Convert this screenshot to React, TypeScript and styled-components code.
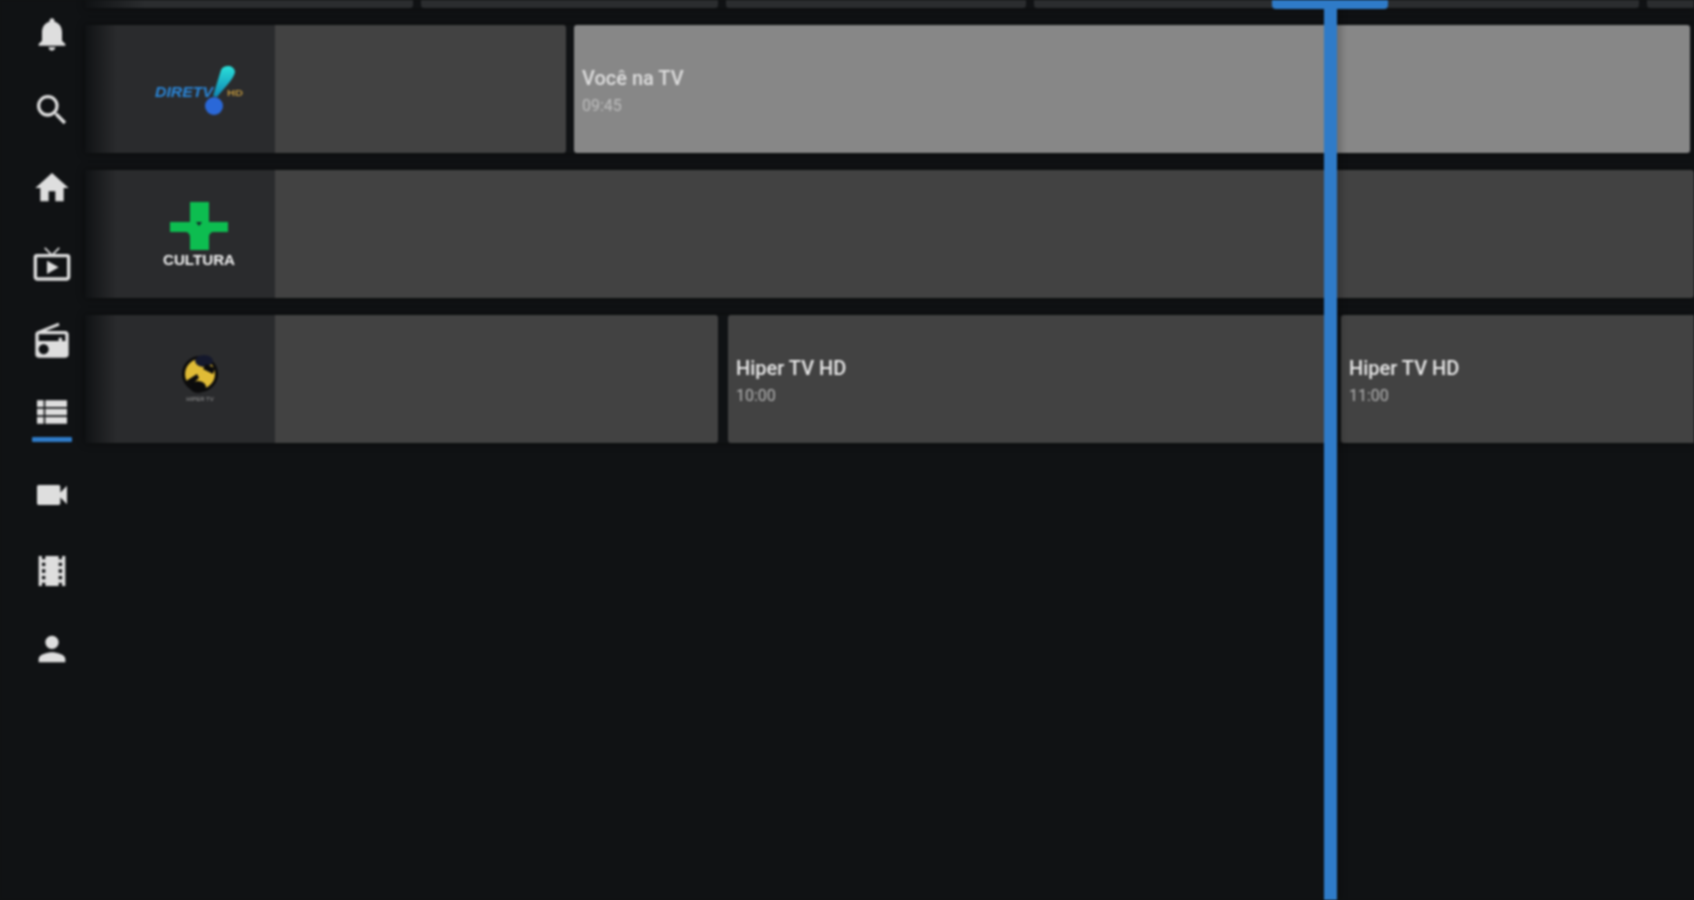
import {
  MdHome,
  MdLiveTv,
  MdLocalMovies,
  MdNotifications,
  MdPerson,
  MdRadio,
  MdSearch,
  MdVideocam,
  MdViewList,
} from "react-icons/md";
import styled, { createGlobalStyle } from "styled-components";

const GlobalStyle = createGlobalStyle`
  html, body {
    margin: 0;
    padding: 0;
    background: #101214;
    font-family: Roboto, "Liberation Sans", sans-serif;
  }
`;

const Page = styled.div`
  width: 1694px;
  height: 900px;
  display: flex;
  overflow: hidden;
  background: #101214;
  filter: blur(0.8px);
`;

const Sidebar = styled.nav`
  flex: 0 0 85px;
  width: 85px;
  padding: 14px 0 0 19px;
  box-sizing: border-box;
  display: flex;
  flex-direction: column;
`;

const NavItem = styled.div<{ $height: number; $active?: boolean }>`
  height: ${({ $height }) => $height}px;
  display: flex;
  flex-direction: column;
  align-items: center;
  color: #dedede;

  &::after {
    content: "";
    display: ${({ $active }) => ($active ? "block" : "none")};
    width: 40px;
    height: 5px;
    margin-top: 5px;
    border-radius: 1px;
    background: #2f7bc8;
  }
`;

const Guide = styled.main`
  position: relative;
  flex: 1;
  min-width: 0;
  display: flex;
  flex-direction: column;
  gap: 17px;
`;

const Row = styled.div<{ $top?: boolean }>`
  height: ${({ $top }) => ($top ? 8 : 128)}px;
  display: flex;
  overflow: hidden;
  box-shadow: 0 0 8px rgba(0, 0, 0, 0.45);
`;

const TopCell = styled.div<{ $width: number; $first?: boolean }>`
  flex: 0 0 ${({ $width }) => $width}px;
  height: 8px;
  margin-right: 8px;
  border-radius: 0 0 3px 3px;
  background: ${({ $first }) =>
    $first ? "linear-gradient(90deg, #101214 0, #2b2d2f 60px)" : "#2b2d2f"};
`;

const Channel = styled.div`
  flex: 0 0 190px;
  padding-left: 36px;
  box-sizing: border-box;
  display: flex;
  align-items: center;
  justify-content: center;
  background: linear-gradient(90deg, #101214 0, #2a2b2d 32px);
`;

const Program = styled.div<{
  $width?: number;
  $gap?: number;
  $focused?: boolean;
  $attached?: boolean;
}>`
  flex: ${({ $width }) => ($width ? `0 0 ${$width}px` : "1 1 auto")};
  margin-right: ${({ $gap }) => $gap ?? 0}px;
  padding: 4px 8px 0;
  box-sizing: border-box;
  display: flex;
  flex-direction: column;
  justify-content: center;
  border-radius: ${({ $attached }) => ($attached ? "0 3px 3px 0" : "3px")};
  background: ${({ $focused }) => ($focused ? "#878787" : "#424242")};
`;

const Title = styled.div<{ $focused?: boolean }>`
  font-size: 20px;
  line-height: 24px;
  font-weight: 500;
  white-space: nowrap;
  color: ${({ $focused }) => ($focused ? "#dedede" : "#e8e8e8")};
`;

const Time = styled.div<{ $focused?: boolean }>`
  margin-top: 6px;
  font-size: 16px;
  line-height: 20px;
  color: ${({ $focused }) => ($focused ? "#bdbdbd" : "#b4b4b4")};
`;

const NowLine = styled.div`
  position: absolute;
  top: 0;
  bottom: 0;
  left: 1239px;
  width: 13px;
  background: #2f7bc8;
  box-shadow: 5px 0 6px rgba(0, 0, 0, 0.18);
`;

const NowTab = styled.div`
  position: absolute;
  top: 0;
  left: 1187px;
  width: 116px;
  height: 9px;
  border-radius: 0 0 4px 4px;
  background: #2f7bc8;
`;

function DiretvLogo() {
  return (
    <svg width="100" height="60" viewBox="0 0 100 60">
      <defs>
        <linearGradient id="drop" x1="0" y1="0" x2="0" y2="1">
          <stop offset="0" stopColor="#2ae0da" />
          <stop offset="1" stopColor="#0f86b4" />
        </linearGradient>
      </defs>
      <text
        x="7"
        y="38"
        fontFamily="'Liberation Sans', sans-serif"
        fontSize="14"
        fontWeight="700"
        fontStyle="italic"
        fill="#2a86d8"
        textLength="58"
        lengthAdjust="spacingAndGlyphs"
      >
        DIRETV
      </text>
      <path d="M73 11 C75 6 86 5 87 13 C86 20 75 30 69 38 L65 37 Z" fill="url(#drop)" />
      <circle cx="66" cy="47" r="9" fill="#2a68d8" />
      <text
        x="79"
        y="37"
        fontFamily="'Liberation Sans', sans-serif"
        fontSize="9"
        fontWeight="700"
        fill="#b8913c"
        textLength="16"
        lengthAdjust="spacingAndGlyphs"
      >
        HD
      </text>
    </svg>
  );
}

function CulturaLogo() {
  return (
    <svg width="100" height="76" viewBox="0 0 100 76">
      <path
        d="M42 6h19v20h19v10H66c-3 0-5 2-5 5v13H42V41c0-3-2-5-5-5H22V26h20z"
        fill="#0dbd50"
      />
      <path d="M48 26l3 4 3-4z" fill="#15252a" />
      <text
        x="51"
        y="69"
        textAnchor="middle"
        fontFamily="'Liberation Sans', sans-serif"
        fontSize="14"
        fontWeight="700"
        fill="#f2f2f2"
        textLength="72"
        lengthAdjust="spacingAndGlyphs"
      >
        CULTURA
      </text>
    </svg>
  );
}

function HiperLogo() {
  return (
    <svg width="100" height="56" viewBox="0 0 100 56">
      <circle cx="52" cy="23" r="18" fill="#0b0b0c" />
      <circle cx="52" cy="23" r="15" fill="#e0bb36" />
      <ellipse cx="56" cy="10" rx="9" ry="6" fill="#14182c" />
      <ellipse cx="50" cy="36" rx="8" ry="6" fill="#0b0b0c" />
      <path d="M38 30l11-7 2 4-9 8zM58 13l9 4-2 6-10-5z" fill="#0b0b0c" />
      <text
        x="52"
        y="50"
        textAnchor="middle"
        fontFamily="'Liberation Sans', sans-serif"
        fontSize="6"
        fill="#9a9a9a"
      >
        HIPER TV
      </text>
    </svg>
  );
}

const topCells = [328, 297, 300, 605, 60];

export default function App() {
  return (
    <>
      <GlobalStyle />
      <Page>
        <Sidebar>
          <NavItem $height={76}>
            <MdNotifications size={40} />
          </NavItem>
          <NavItem $height={78}>
            <MdSearch size={40} />
          </NavItem>
          <NavItem $height={76}>
            <MdHome size={40} />
          </NavItem>
          <NavItem $height={77}>
            <MdLiveTv size={40} />
          </NavItem>
          <NavItem $height={71}>
            <MdRadio size={40} />
          </NavItem>
          <NavItem $height={83} $active>
            <MdViewList size={40} />
          </NavItem>
          <NavItem $height={76}>
            <MdVideocam size={40} />
          </NavItem>
          <NavItem $height={78}>
            <MdLocalMovies size={40} />
          </NavItem>
          <NavItem $height={60}>
            <MdPerson size={40} />
          </NavItem>
        </Sidebar>
        <Guide>
          <Row $top>
            {topCells.map((width, i) => (
              <TopCell key={i} $width={width} $first={i === 0} />
            ))}
          </Row>
          <Row>
            <Channel>
              <DiretvLogo />
            </Channel>
            <Program $width={291} $gap={8} $attached />
            <Program $width={1116} $focused>
              <Title $focused>Você na TV</Title>
              <Time $focused>09:45</Time>
            </Program>
          </Row>
          <Row>
            <Channel>
              <CulturaLogo />
            </Channel>
            <Program $attached />
          </Row>
          <Row>
            <Channel>
              <HiperLogo />
            </Channel>
            <Program $width={443} $gap={10} $attached />
            <Program $width={603} $gap={10}>
              <Title>Hiper TV HD</Title>
              <Time>10:00</Time>
            </Program>
            <Program $width={360}>
              <Title>Hiper TV HD</Title>
              <Time>11:00</Time>
            </Program>
          </Row>
          <NowLine />
          <NowTab />
        </Guide>
      </Page>
    </>
  );
}
